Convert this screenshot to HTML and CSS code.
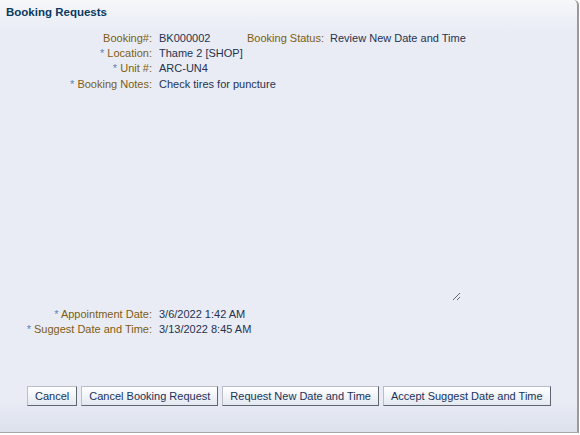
FILE: index.html
```html
<!DOCTYPE html>
<html lang="en">
<head>
    <meta charset="UTF-8">
    <title>Booking Requests</title>
    <link rel="stylesheet" href="styles.css">
</head>
<body>
    <div class="panel">
        <h2 class="title">Booking Requests</h2>
        <div class="form">
            <div class="row">
                <span class="label">Booking#:</span>
                <span class="value num">BK000002</span>
                <span class="label status-label">Booking Status:</span>
                <span class="value status-value">Review New Date and Time</span>
            </div>
            <div class="row">
                <span class="label"><i>*</i> Location:</span>
                <span class="value">Thame 2 [SHOP]</span>
            </div>
            <div class="row">
                <span class="label"><i>*</i> Unit #:</span>
                <span class="value">ARC-UN4</span>
            </div>
            <div class="row notes-row">
                <span class="label"><i>*</i> Booking Notes:</span>
                <textarea class="notes">Check tires for puncture</textarea>
            </div>
            <div class="row">
                <span class="label"><i>*</i> Appointment Date:</span>
                <span class="value">3/6/2022 1:42 AM</span>
            </div>
            <div class="row">
                <span class="label"><i>*</i> Suggest Date and Time:</span>
                <span class="value">3/13/2022 8:45 AM</span>
            </div>
        </div>
        <div class="buttons">
            <button class="btn">Cancel</button>
            <button class="btn">Cancel Booking Request</button>
            <button class="btn">Request New Date and Time</button>
            <button class="btn">Accept Suggest Date and Time</button>
        </div>
    </div>
</body>
</html>
```

FILE: styles.css
```css
body {
    margin: 0;
    background: #ffffff;
    font-family: "Liberation Sans", Arial, sans-serif;
    font-size: 11px;
}
.panel {
    width: 577px;
    height: 432px;
    background: linear-gradient(#f6f7fb 0px, #e9ecf5 32px, #e9ecf5 400px, #dde1ec 432px);
    border-right: 2px solid #9a9a9a;
    border-bottom: 1px solid #a8a8a8;
    border-radius: 0 5px 0 0;
    display: flex;
    flex-direction: column;
}
.title {
    margin: 0;
    padding: 6px 0 0 6px;
    height: 20px;
    font-size: 11.5px;
    font-weight: bold;
    color: #0a3a5f;
}
.form {
    display: flex;
    flex-direction: column;
    padding-top: 5px;
}
.row {
    display: flex;
    align-items: flex-start;
    height: 15px;
    line-height: 15px;
}
.label {
    width: 152px;
    text-align: right;
    color: #7d5d12;
    white-space: nowrap;
    flex-shrink: 0;
}
.label i {
    font-style: normal;
    color: #5d83b8;
}
.value {
    color: #26324f;
    padding-left: 7px;
    white-space: nowrap;
}
.num {
    width: 81px;
    padding-right: 7px;
}
.status-label {
    width: auto;
}
.status-value {
    padding-left: 6px;
}
.notes-row {
    height: 230px;
    padding-top: 1px;
}
.notes {
    margin: 0 0 0 7px;
    padding: 0;
    width: 302px;
    height: 224px;
    border: none;
    background: transparent;
    font: inherit;
    line-height: 15px;
    color: #26324f;
    outline: none;
}
.buttons {
    display: flex;
    gap: 4px;
    margin-top: auto;
    padding: 0 0 26px 27px;
}
.btn {
    font: inherit;
    color: #20325a;
    height: 20px;
    padding: 0 7px;
    white-space: nowrap;
    background: linear-gradient(#ffffff, #e4e8f0);
    border: 1px solid #b9bec8;
    border-right-color: #5f6570;
    border-bottom-color: #5f6570;
    border-radius: 0;
}
```
